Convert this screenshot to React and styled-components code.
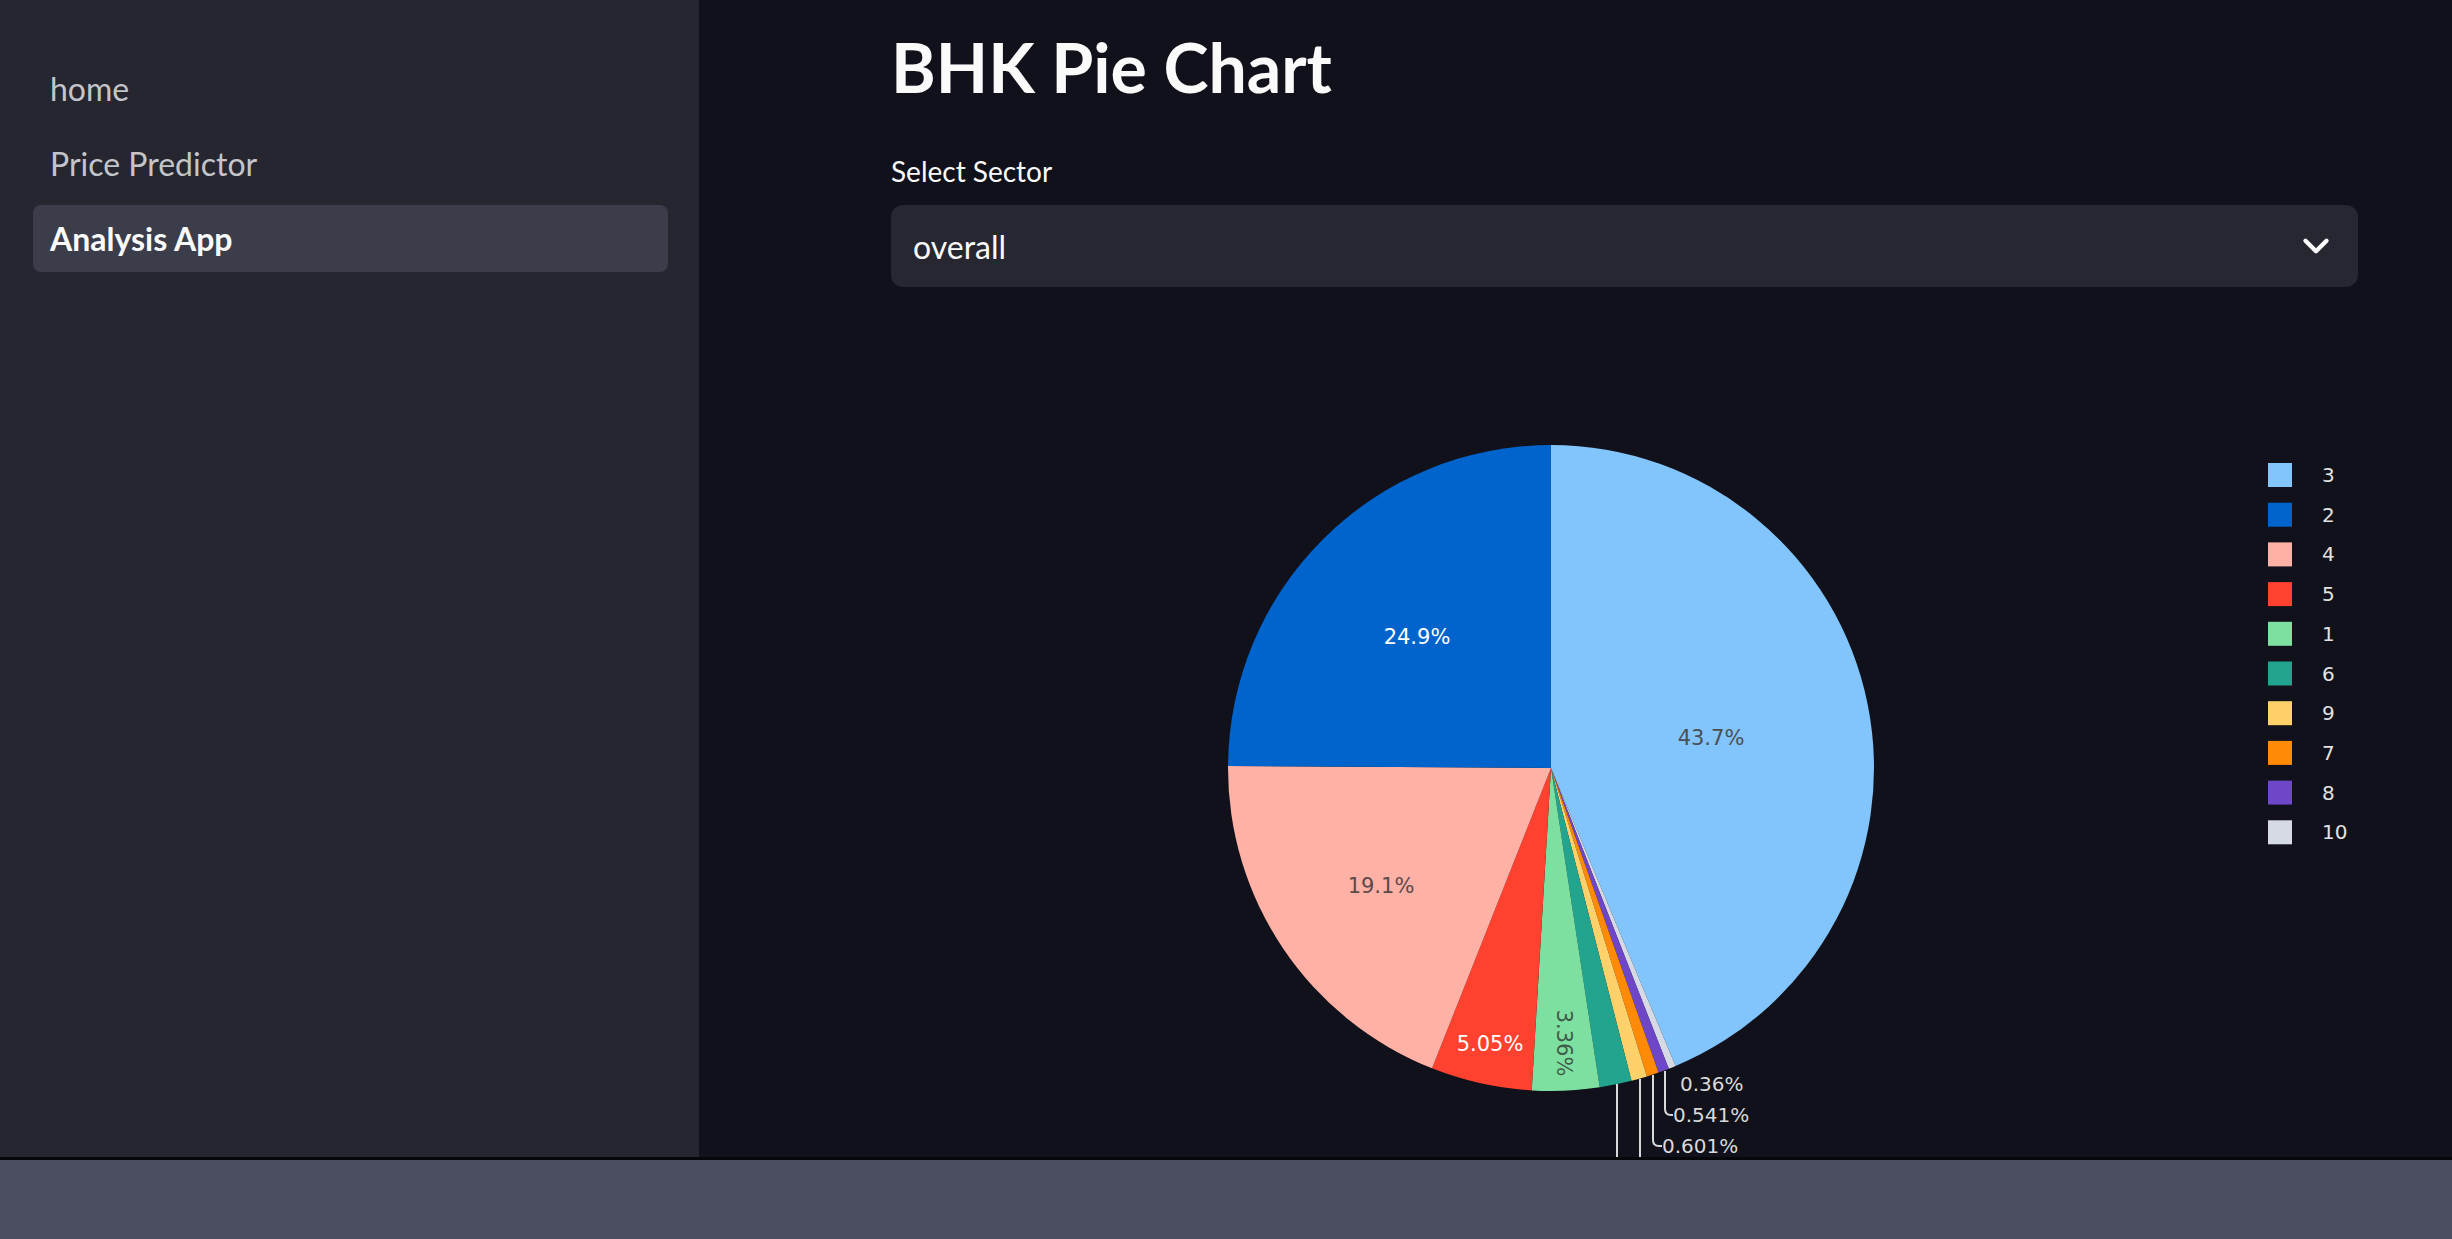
import React from "react";
import styled, { createGlobalStyle } from "styled-components";
import { ChevronDown } from "lucide-react";

const GlobalStyle = createGlobalStyle`
  html, body {
    margin: 0;
    padding: 0;
    background: #10111a;
    overflow: hidden;
  }
  * {
    box-sizing: border-box;
  }
`;

const navItems = [
  { label: "home" },
  { label: "Price Predictor" },
  { label: "Analysis App", active: true },
];

// clockwise from 12 o'clock
const slices = [
  { key: "3", value: 43.7, color: "#82c4fc" },
  { key: "10", value: 0.36, color: "#d5dae5" },
  { key: "8", value: 0.541, color: "#6d47c8" },
  { key: "7", value: 0.601, color: "#ff8a05" },
  { key: "9", value: 0.79, color: "#ffd16a" },
  { key: "6", value: 1.6, color: "#23a48f" },
  { key: "1", value: 3.36, color: "#7de0a0" },
  { key: "5", value: 5.05, color: "#ff4130" },
  { key: "4", value: 19.1, color: "#ffb1a6" },
  { key: "2", value: 24.9, color: "#0064cc" },
];

const legend = ["3", "2", "4", "5", "1", "6", "9", "7", "8", "10"];

const CX = 660;
const CY = 468;
const R = 323;

const point = (deg, r = R) => {
  const a = (deg * Math.PI) / 180;
  return [CX + r * Math.sin(a), CY - r * Math.cos(a)];
};

const slicePath = (from, to) => {
  const [x1, y1] = point(from);
  const [x2, y2] = point(to);
  const large = to - from > 180 ? 1 : 0;
  return `M${CX},${CY} L${x1},${y1} A${R},${R} 0 ${large} 1 ${x2},${y2} Z`;
};

const total = slices.reduce((s, d) => s + d.value, 0);
let acc = 0;
const arcs = slices.map((d) => {
  const from = (acc / total) * 360;
  acc += d.value;
  const to = (acc / total) * 360;
  return { ...d, from, to };
});

const PieChart = () => (
  <ChartSvg viewBox="0 0 1467 857">
    {arcs.map((a) => (
      <path key={a.key} d={slicePath(a.from, a.to)} fill={a.color} />
    ))}

    <SliceText x={526} y={337} fill="#ffffff">24.9%</SliceText>
    <SliceText x={820} y={438} fill="#4a4f57">43.7%</SliceText>
    <SliceText x={490} y={586} fill="#5a4a4a">19.1%</SliceText>
    <SliceText x={599} y={744} fill="#ffffff">5.05%</SliceText>
    <SliceText x={673} y={743} fill="#3e5a48" transform="rotate(90 673 743)">
      3.36%
    </SliceText>

    <g fill="none" stroke="#d8d8d8" strokeWidth="2">
      <path d="M726,784 L726,857" />
      <path d="M749,779 L749,857" />
      <path d="M762,775 L762,840 Q762,846 768,846 L771,846" />
      <path d="M774,771 L774,809 Q774,815 780,815 L782,815" />
    </g>
    <OutsideText x={789} y={784}>0.36%</OutsideText>
    <OutsideText x={782} y={815}>0.541%</OutsideText>
    <OutsideText x={771} y={846}>0.601%</OutsideText>

    {legend.map((key, i) => {
      const item = slices.find((s) => s.key === key);
      const y = 175 + i * 39.7;
      return (
        <g key={key}>
          <rect x={1377} y={y - 12} width={24} height={24} fill={item.color} />
          <LegendText x={1431} y={y}>{key}</LegendText>
        </g>
      );
    })}
  </ChartSvg>
);

const App = () => {
  return (
    <Page>
      <GlobalStyle />
      <Body>
        <Sidebar>
          <NavList>
            {navItems.map((item) => (
              <NavItem key={item.label} $active={item.active}>
                {item.label}
              </NavItem>
            ))}
          </NavList>
        </Sidebar>
        <Main>
          <Title>BHK Pie Chart</Title>
          <Label>Select Sector</Label>
          <SelectBox>
            <SelectValue>overall</SelectValue>
            <ChevronDown size={42} strokeWidth={2.5} color="#fafafa" />
          </SelectBox>
          <PieChart />
        </Main>
      </Body>
      <Footer />
    </Page>
  );
};

export default App;

const Page = styled.div`
  width: 100vw;
  height: 100vh;
  display: flex;
  flex-direction: column;
  font-family: Lato, "Noto Sans", sans-serif;
`;

const Body = styled.div`
  display: flex;
  height: 1157px;
  flex-shrink: 0;
`;

const Sidebar = styled.aside`
  width: 699px;
  flex-shrink: 0;
  background-color: #262630;
  padding: 55px 31px 0 33px;
`;

const NavList = styled.nav`
  display: flex;
  flex-direction: column;
  gap: 8px;
`;

const NavItem = styled.div`
  height: 67px;
  display: flex;
  align-items: center;
  padding-left: 17px;
  border-radius: 8px;
  font-size: 32px;
  font-weight: ${({ $active }) => ($active ? 700 : 400)};
  color: ${({ $active }) => ($active ? "#fafafa" : "#c4c5ca")};
  background-color: ${({ $active }) => ($active ? "#3c3d4a" : "transparent")};
`;

const Main = styled.main`
  flex: 1;
  min-width: 0;
  overflow: hidden;
  background-color: #10111a;
  padding: 26px 94px 0 192px;
`;

const Title = styled.h1`
  margin: 0;
  font-size: 68px;
  line-height: 1.2;
  font-weight: 700;
  color: #fafafa;
`;

const Label = styled.div`
  margin-top: 47px;
  font-size: 28px;
  line-height: 1.2;
  color: #fafafa;
`;

const SelectBox = styled.div`
  margin-top: 17px;
  height: 82px;
  display: flex;
  align-items: center;
  justify-content: space-between;
  padding: 0 21px 0 22px;
  border-radius: 12px;
  background-color: #272731;
`;

const SelectValue = styled.span`
  font-size: 32px;
  color: #fafafa;
`;

const ChartSvg = styled.svg`
  display: block;
  margin-top: 13px;
  width: 1467px;
  height: 857px;
  overflow: hidden;
`;

const SliceText = styled.text`
  font-family: "DejaVu Sans", sans-serif;
  font-size: 21px;
  text-anchor: middle;
  dominant-baseline: central;
`;

const OutsideText = styled.text`
  font-family: "DejaVu Sans", sans-serif;
  font-size: 20px;
  fill: #d9d9d9;
  dominant-baseline: central;
`;

const LegendText = styled.text`
  font-family: "DejaVu Sans", sans-serif;
  font-size: 20px;
  fill: #e2e2e2;
  dominant-baseline: central;
`;

const Footer = styled.footer`
  flex: 1;
  background-color: #4a4e60;
  border-top: 3px solid #06070b;
`;
